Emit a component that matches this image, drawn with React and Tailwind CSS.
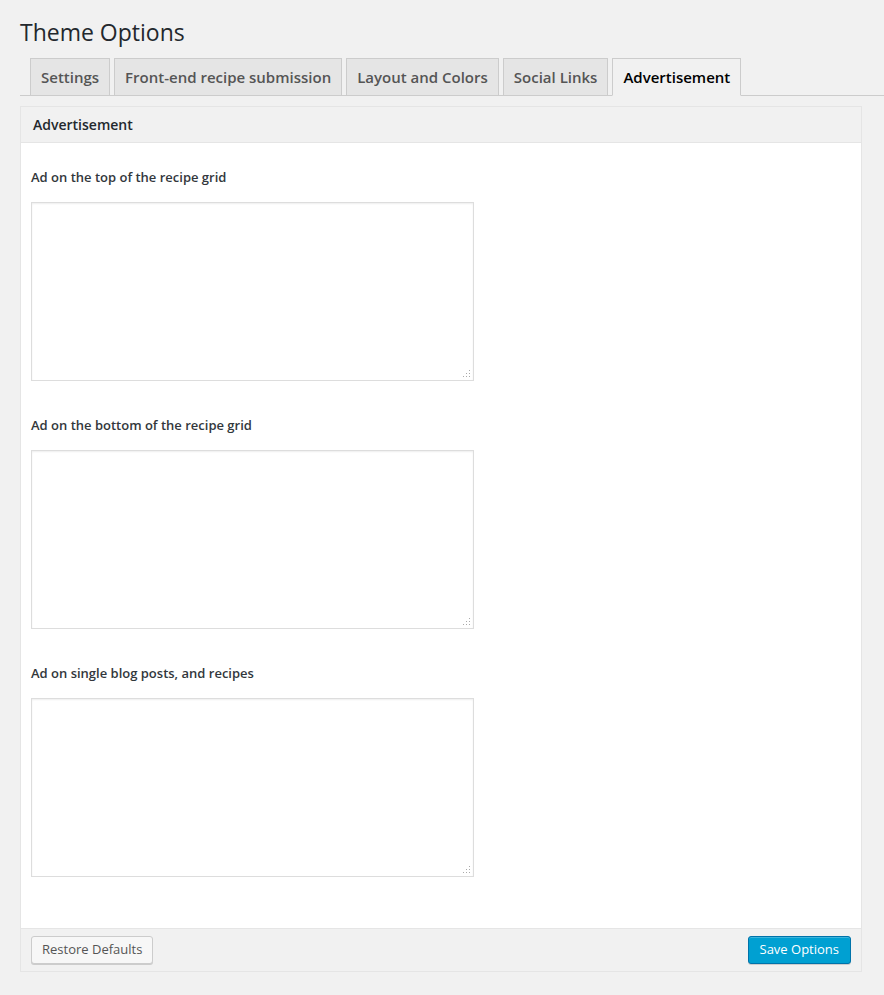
import React from 'react';

const tabs = ['Settings', 'Front-end recipe submission', 'Layout and Colors', 'Social Links', 'Advertisement'];

const fields = [
  'Ad on the top of the recipe grid',
  'Ad on the bottom of the recipe grid',
  'Ad on single blog posts, and recipes',
];

const ResizeDots = () => (
  <svg className="absolute right-[3px] bottom-[3px]" width="8" height="8" viewBox="0 0 8 8">
    <rect x="6" y="0" width="1" height="1" fill="#aaa" />
    <rect x="3" y="3" width="1" height="1" fill="#aaa" />
    <rect x="6" y="3" width="1" height="1" fill="#aaa" />
    <rect x="0" y="6" width="1" height="1" fill="#aaa" />
    <rect x="3" y="6" width="1" height="1" fill="#aaa" />
    <rect x="6" y="6" width="1" height="1" fill="#aaa" />
  </svg>
);

const App = () => {
  return (
    <div
      className="min-h-screen bg-[#f1f1f1] pl-[20px] pt-[18px]"
      style={{ fontFamily: '"Open Sans", "Liberation Sans", sans-serif' }}
    >
      <h1 className="text-[23px] leading-[29px] font-normal text-[#23282d]">Theme Options</h1>

      {/* Tabs */}
      <div className="mt-[11px] flex gap-[4px] pl-[10px] border-b border-[#ccc]">
        {tabs.map((tab) => {
          const active = tab === 'Advertisement';
          return (
            <div
              key={tab}
              className={`-mb-px border px-[10px] py-[6px] text-[15px] leading-[24px] font-semibold ${
                active
                  ? 'bg-[#f1f1f1] border-[#ccc] border-b-[#f1f1f1] text-black'
                  : 'bg-[#e5e5e5] border-[#ccc] text-[#555]'
              }`}
            >
              {tab}
            </div>
          );
        })}
      </div>

      {/* Panel */}
      <div className="mt-[10px] w-[842px] border border-[#e5e5e5]">
        <div className="h-[36px] flex items-center pl-[12px] border-b border-[#e5e5e5] bg-[#f1f1f1] text-[14px] font-semibold text-[#23282d]">
          Advertisement
        </div>

        <div className="bg-white pl-[10px] pt-[24px] pb-[51px] flex flex-col gap-[34px]">
          {fields.map((label) => (
            <div key={label}>
              <div className="text-[13px] leading-[20px] font-semibold text-[#32373c] mb-[15px]">{label}</div>
              <div className="relative w-[443px] h-[179px]">
                <textarea className="w-full h-full resize-none border border-[#ddd] shadow-[inset_0_1px_2px_rgba(0,0,0,0.07)] outline-none bg-white" />
                <ResizeDots />
              </div>
            </div>
          ))}
        </div>

        <div className="flex items-center justify-between border-t border-[#e5e5e5] bg-[#f1f1f1] h-[43px] pl-[10px] pr-[10px]">
          <button
            type="button"
            className="h-[28px] px-[10px] rounded-[3px] border border-[#ccc] bg-[#f7f7f7] shadow-[0_1px_0_#ccc] text-[13px] text-[#555]"
          >
            Restore Defaults
          </button>
          <button
            type="button"
            className="h-[28px] px-[11px] rounded-[3px] border border-[#0073aa] bg-[#00a0d2] shadow-[inset_0_1px_0_rgba(120,200,230,0.5),0_1px_0_rgba(0,0,0,0.15)] text-[13px] text-white"
          >
            Save Options
          </button>
        </div>
      </div>
    </div>
  );
};

export default App;
